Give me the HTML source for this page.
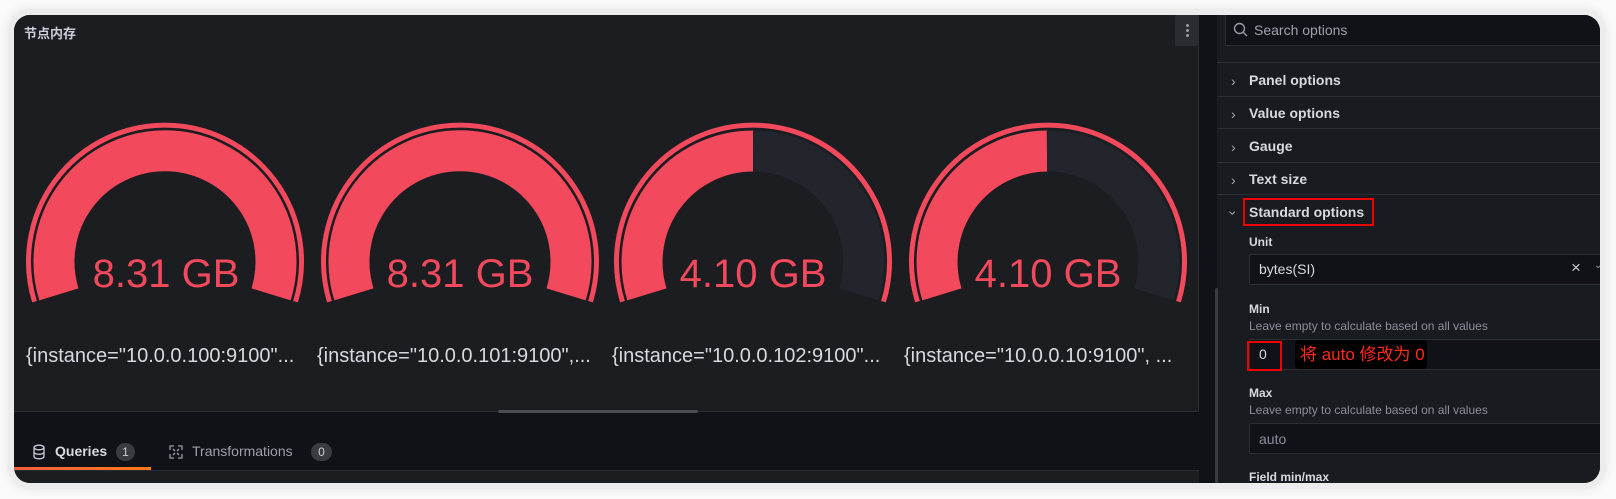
<!DOCTYPE html>
<html><head><meta charset="utf-8"><style>
*{margin:0;padding:0;box-sizing:border-box}
body{width:1616px;height:499px;background:#fafafa;overflow:hidden;font-family:"Liberation Sans","Noto Sans CJK SC",sans-serif;position:relative}
.win{position:absolute;left:14px;top:15px;width:1586px;height:468px;background:#111217;border-radius:16px;overflow:hidden;box-shadow:0 0 0 6px #ececec,0 0 10px 6px #e4e4e4}
.abs{position:absolute}
.panel{left:0;top:0;width:1185px;height:397px;background:#1b1d21;border-right:1px solid #2a2c31;border-bottom:1px solid #2a2c31}
.title{left:10px;top:8px;font-size:13px;font-weight:bold;color:#ccccdc}
.dots{left:1161px;top:0;width:24px;height:31px;background:#2a2c31;border-radius:2px}
.dots i{position:absolute;left:11px;width:3px;height:3px;border-radius:50%;background:#9a9aa6}
.lbl{top:330px;font-size:20px;color:#d8d9e0;white-space:nowrap}
.rp{left:1203px;top:0;width:383px;height:468px;background:#181b1f}
.sec{position:absolute;left:0;width:383px;border-top:1px solid #2c2e33}
.st{position:absolute;font-size:14px;font-weight:bold;color:#d8d9e0}
.chev{position:absolute;left:14px;font-size:14px;color:#aaa;line-height:14px}
.inp{position:absolute;left:32px;width:360px;height:31px;background:#111217;border:1px solid #2c2e33;border-radius:2px}
.desc{position:absolute;left:32px;font-size:12px;color:#8e8e9a}
.lab{position:absolute;left:32px;font-size:12px;font-weight:bold;color:#d8d9e0}
</style></head><body>
<div class="win">
 <div class="abs panel">
  <div class="abs title">节点内存</div>
  <div class="abs dots"><i style="top:9px"></i><i style="top:14px"></i><i style="top:19px"></i></div>
  <svg class="abs" style="left:-14px;top:-15px" width="1199" height="412" fill="none">
   <g stroke="#f2495c" stroke-width="5">
    <path d="M34.5 301.7 A136.5 136.5 0 1 1 295.5 301.7"/>
    <path d="M329.5 301.7 A136.5 136.5 0 1 1 590.5 301.7"/>
    <path d="M622.5 301.7 A136.5 136.5 0 1 1 883.5 301.7"/>
    <path d="M917.5 301.7 A136.5 136.5 0 1 1 1178.5 301.7"/>
   </g>
   <g stroke-width="41">
    <path stroke="#f2495c" d="M58.9 294.4 A111 111 0 1 1 271.1 294.4"/>
    <path stroke="#f2495c" d="M353.9 294.4 A111 111 0 1 1 566.1 294.4"/>
    <path stroke="#f2495c" d="M646.9 294.4 A111 111 0 0 1 753 151"/>
    <path stroke="#22252b" d="M753 151 A111 111 0 0 1 859.1 294.4"/>
    <path stroke="#f2495c" d="M941.9 294.4 A111 111 0 0 1 1047 151"/>
    <path stroke="#22252b" d="M1047 151 A111 111 0 0 1 1154.1 294.4"/>
   </g>
   <g fill="#f2495c" font-family="Liberation Sans, sans-serif" font-size="40" text-anchor="middle">
    <text x="166" y="287">8.31 GB</text>
    <text x="460" y="287">8.31 GB</text>
    <text x="753" y="287">4.10 GB</text>
    <text x="1048" y="287">4.10 GB</text>
   </g>
  </svg>
  <div class="abs lbl" style="left:12px">{instance="10.0.0.100:9100"...</div>
  <div class="abs lbl" style="left:303px">{instance="10.0.0.101:9100",...</div>
  <div class="abs lbl" style="left:598px">{instance="10.0.0.102:9100"...</div>
  <div class="abs lbl" style="left:890px">{instance="10.0.0.10:9100", ...</div>
 </div>
 <div class="abs" style="left:484px;top:395px;width:200px;height:3px;background:#4a4c52;border-radius:2px"></div>
 <svg class="abs" style="left:18px;top:429px" width="14" height="16" fill="none" stroke="#ccccdc" stroke-width="1.3"><ellipse cx="7" cy="3.5" rx="5" ry="2.3"/><path d="M2 3.5v9c0 1.3 2.2 2.3 5 2.3s5-1 5-2.3v-9M2 8c0 1.3 2.2 2.3 5 2.3s5-1 5-2.3"/></svg>
 <div class="abs" style="left:41px;top:428px;font-size:14px;color:#d8d9e0;font-weight:bold">Queries</div>
 <div class="abs" style="left:102px;top:428px;width:19px;height:18px;border-radius:9px;background:#3a3c42;color:#ccc;font-size:12px;text-align:center;line-height:18px">1</div>
 <svg class="abs" style="left:155px;top:430px" width="14" height="14" fill="none" stroke="#9a9aa6" stroke-width="1.3"><path d="M1 5V1h4M9 1h4v4M13 9v4H9M5 13H1V9M4 4l2 2M10 4l-2 2M4 10l2-2M10 10l-2-2"/></svg>
 <div class="abs" style="left:178px;top:428px;font-size:14px;color:#9fa0aa">Transformations</div>
 <div class="abs" style="left:297px;top:428px;width:21px;height:18px;border-radius:9px;background:#3a3c42;color:#ccc;font-size:12px;text-align:center;line-height:18px">0</div>
 <div class="abs" style="left:0;top:455px;width:1185px;height:13px;background:#1b1d21;border-top:1px solid #2a2c31"></div>
 <div class="abs" style="left:0;top:452px;width:137px;height:3px;background:linear-gradient(90deg,#f55f3e,#ff7a1a)"></div>
 <div class="abs rp">
  <div class="abs" style="left:8px;top:0;width:380px;height:31px;border:1px solid #2c2e33;border-top:none;background:#111217"></div>
  <svg class="abs" style="left:16px;top:7px" width="16" height="16" fill="none" stroke="#9a9aa6" stroke-width="1.4"><circle cx="6.5" cy="6.5" r="5"/><path d="M10.3 10.3L14 14"/></svg>
  <div class="abs" style="left:37px;top:7px;font-size:14px;color:#9fa0aa">Search options</div>
  <div class="sec" style="top:47px"></div>
  <div class="sec" style="top:81px"></div>
  <div class="sec" style="top:113px"></div>
  <div class="sec" style="top:147px"></div>
  <div class="sec" style="top:179px"></div>
  <div class="chev" style="top:59px">›</div><div class="st" style="left:32px;top:57px">Panel options</div>
  <div class="chev" style="top:92px">›</div><div class="st" style="left:32px;top:90px">Value options</div>
  <div class="chev" style="top:125px">›</div><div class="st" style="left:32px;top:123px">Gauge</div>
  <div class="chev" style="top:158px">›</div><div class="st" style="left:32px;top:156px">Text size</div>
  <div class="chev" style="top:191px;transform:rotate(90deg)">›</div><div class="st" style="left:32px;top:189px">Standard options</div>
  <div class="abs" style="left:26px;top:183px;width:131px;height:28px;border:2px solid #e00"></div>
  <div class="lab" style="top:220px">Unit</div>
  <div class="inp" style="top:239px"></div>
  <div class="abs" style="left:42px;top:246px;font-size:14px;color:#d8d9e0">bytes(SI)</div>
  <div class="abs" style="left:354px;top:243px;font-size:17px;color:#ccc">×</div>
  <div class="abs" style="left:377px;top:245px;font-size:10px;color:#999">⌄</div>
  <div class="lab" style="top:287px">Min</div>
  <div class="desc" style="top:304px">Leave empty to calculate based on all values</div>
  <div class="inp" style="top:324px"></div>
  <div class="abs" style="left:30px;top:326px;width:35px;height:30px;border:2px solid #e00"></div>
  <div class="abs" style="left:42px;top:331px;font-size:14px;color:#d8d9e0">0</div>
  <div class="abs" style="left:78px;top:325px;width:132px;height:29px;background:#000;border-radius:4px;color:#ff2a1a;font-size:17px;line-height:29px;padding-left:5px;white-space:nowrap">将 auto 修改为 0</div>
  <div class="lab" style="top:371px">Max</div>
  <div class="desc" style="top:388px">Leave empty to calculate based on all values</div>
  <div class="inp" style="top:408px"></div>
  <div class="abs" style="left:42px;top:416px;font-size:14px;color:#8e8e9a">auto</div>
  <div class="lab" style="top:455px">Field min/max</div>
  <div class="abs" style="left:-2px;top:273px;width:3px;height:195px;background:#3a3c42;border-radius:2px"></div>
 </div>
</div>
</body></html>
